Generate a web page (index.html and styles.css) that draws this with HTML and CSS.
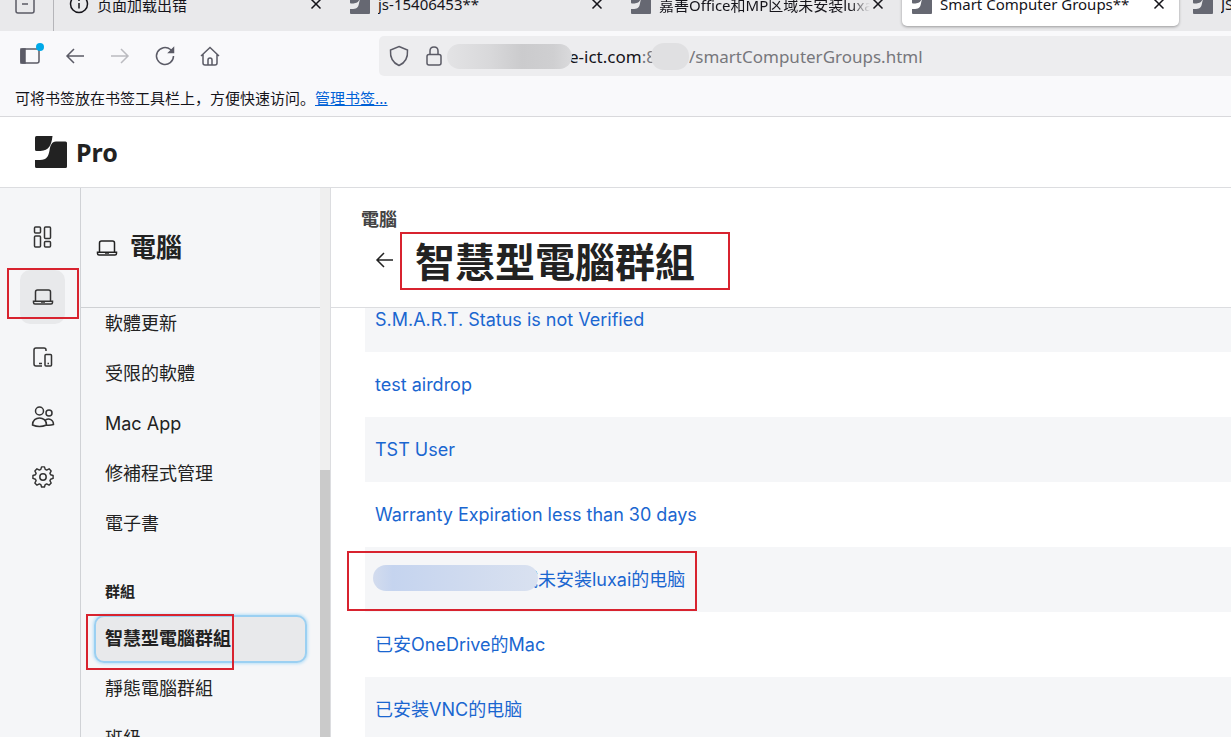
FILE: index.html
```
<!DOCTYPE html>
<html lang="zh-Hant">
<head>
  <meta charset="UTF-8" />
  <meta name="viewport" content="width=device-width, initial-scale=1.0" />
  <title>Smart Computer Groups**</title>
  <link rel="stylesheet" href="styles.css">
</head>
<body>
  <svg class="symbols" aria-hidden="true">
    <symbol id="logo" viewBox="0 0 32 32">
      <path d="M1.500 0H17.500C16.500 9 14 14.500 5.500 15H1.500Q0 15 0 13.500V1.500Q0 0 1.500 0Z" />
      <path d="M21 5.500H30.500Q32 5.500 32 7V30.500Q32 32 30.500 32H1.500Q0 32 0 30.500V24H5C12 24 13.500 20 14.500 14.500C15.500 9 16.500 6 21 5.500Z" />
    </symbol>
    <symbol id="close" viewBox="0 0 12 12">
      <path d="M1.500 1.500l9 9M10.500 1.500l-9 9" />
    </symbol>
    <symbol id="laptop" viewBox="0 0 22 18">
      <path d="M3.500 13V4Q3.500 2 5.500 2H16.500Q18.500 2 18.500 4V13M1.500 13.200H20.500V14.500Q20.500 16 19 16H3Q1.500 16 1.500 14.500ZM9 14h4" />
    </symbol>
  </svg>

  <div class="tabs" lang="zh-CN">
    <button class="tab-list" aria-label="Tabs">
      <svg width="20" height="20" viewBox="0 0 20 20"><path d="M1 4V17Q1 19 3 19H17Q19 19 19 17V4ZM7 10h6M1 2h18" /></svg>
    </button>
    <div class="tab">
      <svg class="info" viewBox="0 0 20 20"><circle cx="10" cy="10" r="8.500" /><path d="M10 9v5.500M10 5.500v1.500" /></svg>
      <span class="tab-title">页面加载出错</span>
      <button class="tab-close" aria-label="Close"><svg><use href="#close" /></svg></button>
    </div>
    <div class="tab">
      <svg class="favicon"><use href="#logo" /></svg>
      <span class="tab-title">js-15406453**</span>
      <button class="tab-close" aria-label="Close"><svg><use href="#close" /></svg></button>
    </div>
    <div class="tab">
      <svg class="favicon"><use href="#logo" /></svg>
      <span class="tab-title fade">嘉善Office和MP区域未安装luxai</span>
      <button class="tab-close" aria-label="Close"><svg><use href="#close" /></svg></button>
    </div>
    <div class="tab active">
      <svg class="favicon"><use href="#logo" /></svg>
      <span class="tab-title">Smart Computer Groups**</span>
      <button class="tab-close" aria-label="Close"><svg><use href="#close" /></svg></button>
    </div>
    <div class="tab">
      <svg class="favicon"><use href="#logo" /></svg>
      <span class="tab-title">JS</span>
    </div>
  </div>

  <div class="toolbar" lang="zh-CN">
    <div class="nav">
      <button aria-label="Sidebar">
        <svg viewBox="0 0 24 24"><rect x="3" y="5" width="18" height="14" rx="2" /><path class="solid" d="M3 5h4v14H3z" /><circle class="dot" cx="22" cy="3" r="4" /></svg>
      </button>
      <button aria-label="Back"><svg viewBox="0 0 24 24"><path d="M21 12H4M11 5l-7 7 7 7" /></svg></button>
      <button class="off" aria-label="Forward" disabled><svg viewBox="0 0 24 24"><path d="M3 12h17M13 5l7 7-7 7" /></svg></button>
      <button aria-label="Reload"><svg viewBox="0 0 24 24"><path d="M20.500 12A8.500 8.500 0 1 1 17.500 5.500L20 8" /><path class="solid" d="M20.500 4V8.500H16z" /></svg></button>
      <button aria-label="Home"><svg viewBox="0 0 24 24"><path d="M3 12l9-8.500L21 12M5 10.500V19Q5 21 7 21H17Q19 21 19 19V10.500M10 21V16Q10 14 12 14T14 16V21" /></svg></button>
      <div class="address">
        <svg viewBox="0 0 24 24"><path d="M12 2.500L20.500 6C21 13 18 19 12 21.500C6 19 3 13 3.500 6Z" /></svg>
        <svg viewBox="0 0 24 24"><rect x="5" y="10.500" width="14" height="10.500" rx="2" /><path d="M8 10.500V7Q8 3 12 3T16 7V10.500" /></svg>
        <span class="smudge host"></span>
        <label class="origin" for="path">e-ict.com<span>:8</span></label>
        <span class="smudge port"></span>
        <input id="path" type="text" value="/smartComputerGroups.html">
      </div>
    </div>
    <div class="bookmarks">可将书签放在书签工具栏上，方便快速访问。<a href="#">管理书签...</a></div>
  </div>

  <header class="brand">
    <svg><use href="#logo" /></svg>
    <span>Pro</span>
  </header>

  <div class="layout">
    <nav class="rail">
      <a href="#" aria-label="Dashboard">
        <svg viewBox="0 0 24 24"><rect x="3.500" y="2" width="6" height="6" rx="1" /><rect x="13.500" y="2" width="6" height="11.500" rx="1" /><rect x="3.500" y="11" width="6" height="11" rx="1" /><rect x="13.500" y="16.500" width="6" height="5.500" rx="1" /></svg>
      </a>
      <a href="#" class="active" aria-label="Computers">
        <svg class="laptop"><use href="#laptop" /></svg>
        <span class="mark mark-rail"></span>
      </a>
      <a href="#" aria-label="Devices">
        <svg viewBox="0 0 24 24"><path d="M11 21H5Q3 21 3 19V5Q3 3 5 3H13Q15 3 15 5V6M8 18.500h3" /><rect x="14" y="9.500" width="6.500" height="11.500" rx="1" /><path d="M16.500 18.500h1.500" /></svg>
      </a>
      <a href="#" aria-label="Users">
        <svg viewBox="0 0 24 24"><circle cx="8.500" cy="6" r="4" /><circle cx="18" cy="8" r="3" /><path d="M1.500 20C1.500 10.500 15.500 10.500 15.500 20Q8.500 23 1.500 20ZM14.500 15C18 13 22.500 14.500 22.500 19.500Q19 20.500 15.500 20" /></svg>
      </a>
      <a href="#" aria-label="Settings">
        <svg viewBox="0 0 24 24"><circle cx="12" cy="12" r="3.200" /><path d="M10.500 2.500h3l.8 2.600 1.500.7 2.500-1.300 2.200 2.200-1.300 2.500.7 1.500 2.600.8v3l-2.600.8-.7 1.500 1.300 2.500-2.200 2.200-2.500-1.300-1.500.7-.8 2.600h-3l-.8-2.600-1.500-.7-2.500 1.300-2.200-2.200 1.300-2.500-.7-1.500-2.600-.8v-3l2.600-.8.7-1.500-1.300-2.500 2.200-2.200 2.500 1.300 1.500-.7z" stroke-linejoin="round" transform="translate(.500 -.500) scale(.96)" /></svg>
      </a>
    </nav>

    <aside class="sidebar">
      <div class="sidebar-body">
        <div class="sidebar-head">
          <svg class="laptop"><use href="#laptop" /></svg>
          <h2>電腦</h2>
        </div>
        <div class="menu-wrap">
          <div class="menu">
            <a href="#">軟體更新</a>
            <a href="#">受限的軟體</a>
            <a href="#">Mac App</a>
            <a href="#">修補程式管理</a>
            <a href="#">電子書</a>
            <h3>群組</h3>
            <a href="#" class="active">智慧型電腦群組<span class="mark mark-menu"></span></a>
            <a href="#">靜態電腦群組</a>
            <a href="#">班級</a>
          </div>
        </div>
      </div>
      <div class="scrollbar"><div class="thumb"></div></div>
    </aside>

    <main>
      <div class="page-head">
        <div class="crumb">電腦</div>
        <div class="title-row">
          <button aria-label="Back"><svg viewBox="0 0 20 20"><path d="M18 10H2M9 3l-7 7 7 7" /></svg></button>
          <h1>智慧型電腦群組<span class="mark mark-title"></span></h1>
        </div>
      </div>
      <div class="table-wrap">
        <table lang="zh-CN">
          <tr><td><a href="#">S.M.A.R.T. Status is not Verified</a></td></tr>
          <tr><td><a href="#">test airdrop</a></td></tr>
          <tr><td><a href="#">TST User</a></td></tr>
          <tr><td><a href="#">Warranty Expiration less than 30 days</a></td></tr>
          <tr><td><a href="#" class="masked"><span class="smudge name"></span>域未安装luxai的电脑</a><span class="mark mark-row"></span></td></tr>
          <tr><td><a href="#">已安OneDrive的Mac</a></td></tr>
          <tr><td><a href="#">已安装VNC的电脑</a></td></tr>
        </table>
      </div>
    </main>
  </div>
</body>
</html>
```
FILE: styles.css
```
* {
  box-sizing: border-box;
}
body {
  margin: 0;
  height: 100vh;
  display: flex;
  flex-direction: column;
  overflow: hidden;
  background: #fff;
  color: #222;
  font-family: Inter, "Noto Sans CJK TC", sans-serif;
  font-size: 18px;
}
button {
  border: none;
  background: none;
  padding: 0;
  cursor: pointer;
}
svg {
  display: block;
  flex: none;
  fill: none;
  stroke: currentColor;
  stroke-width: 1.5;
}
a {
  text-decoration: none;
}
.symbols {
  position: absolute;
  width: 0;
  height: 0;
}

/* browser tabs */
.tabs {
  height: 31px;
  flex: none;
  display: flex;
  align-items: flex-end;
  gap: 4px;
  padding-bottom: 5px;
  overflow: hidden;
  background: #e9e9eb;
  font-family: "Noto Sans", "Noto Sans CJK SC", sans-serif;
  font-size: 15px;
  color: #15141a;
}
.tab-list {
  width: 54px;
  height: 54px;
  flex: none;
  margin: 0 1px -5px 0;
  padding: 0 0 0 15px;
  border-right: 1px solid #b5b5b9;
  color: #5b5b66;
}
.tab {
  width: 277px;
  height: 44px;
  flex: none;
  display: flex;
  align-items: center;
  gap: 8px;
  padding: 0 14px 0 10px;
  border-radius: 5px;
}
.tab.active {
  background: #fff;
  box-shadow: 0 1px 3px rgba(0,0,0,0.35);
}
.info {
  width: 20px;
  height: 20px;
}
.favicon {
  width: 20px;
  height: 20px;
  fill: #666872;
  stroke: none;
}
.tab-title {
  flex: 1;
  overflow: hidden;
  white-space: nowrap;
}
.tab-title.fade {
  margin-right: -6px;
  -webkit-mask-image: linear-gradient(to left, transparent, #000 20px);
  mask-image: linear-gradient(to left, transparent, #000 20px);
}
.tab-close svg {
  width: 12px;
  height: 12px;
  color: #15141a;
}

/* toolbar */
.toolbar {
  flex: none;
  background: #f9f9fb;
  border-bottom: 1px solid #d9d9dc;
  font-family: "Noto Sans", "Noto Sans CJK SC", sans-serif;
}
.nav {
  height: 50px;
  display: flex;
  align-items: center;
  gap: 21px;
  padding-left: 18px;
}
.nav button {
  color: #5b5b66;
}
.nav svg {
  width: 24px;
  height: 24px;
  overflow: visible;
}
.nav .off {
  color: #bbbbc0;
}
.solid {
  fill: currentColor;
}
.dot {
  fill: #00a9e8;
  stroke: none;
}
.address {
  flex: 1;
  height: 40px;
  margin-left: 136px;
  padding-left: 8px;
  display: flex;
  align-items: center;
  background: #ededef;
  border-radius: 5px 0 0 5px;
  font-size: 17px;
  color: #5b5b66;
}
.address svg {
  margin-right: 11px;
}
.origin {
  color: #15141a;
}
.origin span {
  color: #77777c;
}
.address input {
  flex: 1;
  min-width: 0;
  border: none;
  padding: 0;
  background: none;
  font: inherit;
  color: #77777c;
}
.smudge {
  flex: none;
  border-radius: 13px;
}
.host {
  width: 125px;
  height: 25px;
  margin: 0 -3px 0 -10px;
  background: linear-gradient(to right, #e3e3e5, #d8d8da 35%, #cbcbcd 60%, #cfcfd1 85%, #dadadc);
  position: relative;
}
.port {
  width: 38px;
  height: 27px;
  margin: 0 0 0 -5px;
  background: #e0e0e2;
  position: relative;
}
.bookmarks {
  height: 35px;
  padding-left: 15px;
  line-height: 33px;
  font-family: "Noto Sans CJK SC", sans-serif;
  font-size: 15px;
  color: #15141a;
}
.bookmarks a {
  color: #0061d6;
  text-decoration: underline;
}

/* app */
.brand {
  height: 71px;
  flex: none;
  display: flex;
  align-items: center;
  gap: 9px;
  padding-left: 35px;
  border-bottom: 1px solid #dcdde0;
  font-family: "Noto Sans", sans-serif;
  font-size: 25px;
  line-height: 32px;
  font-weight: bold;
}
.brand svg {
  width: 32px;
  height: 32px;
  fill: #222;
  stroke: none;
}
.layout {
  flex: 1;
  min-height: 0;
  display: flex;
}
.rail {
  width: 81px;
  flex: none;
  display: flex;
  flex-direction: column;
  gap: 6px;
  padding: 22px 0 0 20px;
  background: #f5f6f8;
  border-right: 1px solid #d0d2d6;
}
.rail a {
  position: relative;
  width: 45px;
  height: 54px;
  display: flex;
  align-items: center;
  justify-content: center;
  border-radius: 10px;
  color: #333;
}
.rail a.active {
  background: #e8e9eb;
}
.rail svg {
  width: 24px;
  height: 24px;
}
.rail .laptop,
.laptop {
  width: 22px;
  height: 18px;
}
.sidebar {
  width: 250px;
  flex: none;
  display: flex;
  background: #f5f6f8;
  border-right: 1px solid #dcdde0;
}
.sidebar-body {
  flex: 1;
  min-width: 0;
  display: flex;
  flex-direction: column;
}
.sidebar-head {
  height: 120px;
  flex: none;
  display: flex;
  align-items: center;
  gap: 12px;
  padding-left: 15px;
  border-bottom: 1px solid #cfd1d4;
}
.sidebar-head h2 {
  margin: 0;
  line-height: 40px;
  font-size: 26px;
}
.menu-wrap {
  flex: 1;
  min-height: 0;
  overflow: hidden;
}
.menu {
  margin-top: -8px;
  padding: 0 13px;
  display: flex;
  flex-direction: column;
  gap: 2px;
}
.menu a {
  position: relative;
  height: 48px;
  padding-left: 11px;
  line-height: 48px;
  color: #222;
  border-radius: 10px;
}
.menu a.active {
  background: #e8e9eb;
  font-weight: bold;
  box-shadow: inset 0 0 0 2px #9bd0f2, 0 0 3px 1px #b9e0f8;
}
.menu h3 {
  height: 63px;
  margin: 0;
  padding: 20px 0 0 11px;
  line-height: 43px;
  font-size: 15px;
}
.scrollbar {
  width: 10px;
  flex: none;
  display: flex;
  align-items: flex-end;
  background: #efefef;
}
.thumb {
  width: 100%;
  height: 267px;
  background: #cacaca;
}
main {
  flex: 1;
  min-width: 0;
  display: flex;
  flex-direction: column;
}
.page-head {
  height: 120px;
  flex: none;
  padding: 19px 0 0 30px;
  border-bottom: 1px solid #dcdde0;
}
.crumb {
  line-height: 26px;
  font-weight: bold;
  color: #444;
}
.title-row {
  display: flex;
  align-items: center;
  gap: 20px;
  padding-left: 14px;
}
.title-row button {
  padding-bottom: 6px;
}
.title-row svg {
  width: 20px;
  height: 20px;
  color: #222;
}
h1 {
  position: relative;
  margin: 0;
  line-height: 60px;
  font-size: 40px;
}
.table-wrap {
  flex: 1;
  min-height: 0;
  padding-left: 34px;
  overflow: hidden;
}
table {
  width: 100%;
  margin-top: -21px;
  border-collapse: collapse;
}
td {
  position: relative;
  height: 65px;
  padding: 0 10px;
  line-height: 24px;
}
tr:nth-child(odd) {
  background: #f5f6f8;
}
td a {
  color: #1a66d0;
  font-family: Inter, "Noto Sans CJK SC", sans-serif;
}
.masked {
  display: flex;
  align-items: center;
}
.name {
  width: 165px;
  height: 26px;
  margin: -4px -18px 0 -2px;
  background: linear-gradient(to right, #d3dcee, #c5d4ef 12%, #d0dbef 60%, #d9e1f0);
  position: relative;
}

/* red highlight boxes */
.mark {
  position: absolute;
  border: 2px solid #d8232f;
  pointer-events: none;
}
.mark-rail {
  left: -13px;
  top: -2px;
  width: 72px;
  height: 51px;
}
.mark-menu {
  left: -8px;
  top: -1px;
  width: 148px;
  height: 56px;
}
.mark-title {
  left: -15px;
  top: -1px;
  width: 330px;
  height: 58px;
}
.mark-row {
  left: -18px;
  top: 4px;
  width: 350px;
  height: 60px;
}
```
